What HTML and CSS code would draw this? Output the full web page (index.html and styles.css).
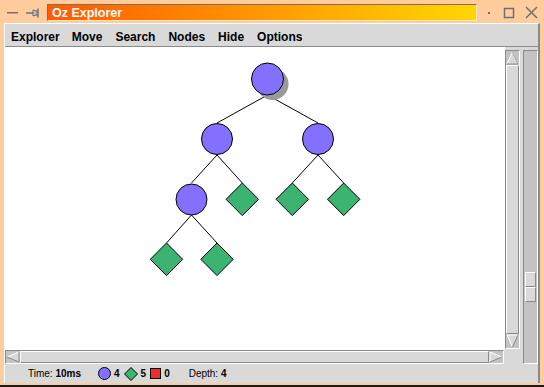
FILE: index.html
```html
<!DOCTYPE html>
<html lang="en">
<head>
    <meta charset="UTF-8">
    <title>Oz Explorer</title>
    <link rel="stylesheet" href="styles.css">
</head>
<body>

    <div class="window">
        <div class="titlebar">
            <svg class="tb-min" width="12" height="23" viewBox="0 0 12 23">
                <rect x="0" y="12" width="11" height="1.5" fill="#707070"/>
            </svg>
            <svg class="tb-pin" width="14" height="23" viewBox="0 0 14 23">
                <line x1="0" y1="13" x2="7" y2="13" stroke="#707070" stroke-width="1.5"/>
                <path d="M7 10 L11 11 L11 15 L7 16 Z" fill="#bdbdbd" stroke="#707070"/>
                <line x1="12" y1="8.5" x2="12" y2="17.5" stroke="#707070" stroke-width="1.5"/>
            </svg>
            <div class="title">Oz Explorer</div>
            <svg class="tb-dot" width="4" height="23" viewBox="0 0 4 23">
                <rect x="1" y="12" width="2" height="2" fill="#707070"/>
            </svg>
            <svg class="tb-max" width="12" height="23" viewBox="0 0 12 23">
                <rect x="1.5" y="8.5" width="9" height="9" fill="none" stroke="#707070" stroke-width="1.5"/>
            </svg>
            <svg class="tb-close" width="13" height="23" viewBox="0 0 13 23">
                <path d="M1 7 L12 18 M12 7 L1 18" stroke="#707070" stroke-width="1.5"/>
            </svg>
        </div>

        <div class="frame">
            <div class="menubar">
                <span>Explorer</span>
                <span>Move</span>
                <span>Search</span>
                <span>Nodes</span>
                <span>Hide</span>
                <span>Options</span>
            </div>

            <div class="workspace">
                <div class="canvas">
                    <svg class="tree" width="500" height="303" viewBox="5 48 500 303">
                        <g stroke="#000" stroke-width="1">
                            <line x1="267.5" y1="96" x2="217" y2="124"/>
                            <line x1="267.5" y1="96" x2="318" y2="124"/>
                            <line x1="217" y1="156" x2="191.5" y2="184"/>
                            <line x1="217" y1="156" x2="242.3" y2="184"/>
                            <line x1="318" y1="156" x2="292.3" y2="184"/>
                            <line x1="318" y1="156" x2="343.7" y2="184"/>
                            <line x1="191.5" y1="216" x2="166.5" y2="244"/>
                            <line x1="191.5" y1="216" x2="217" y2="244"/>
                        </g>
                        <circle cx="272.5" cy="85" r="16" fill="#9a9a9a"/>
                        <g fill="#8470ff" stroke="#000" stroke-width="1">
                            <circle cx="267.5" cy="80" r="16"/>
                            <circle cx="217" cy="140" r="15.5"/>
                            <circle cx="318" cy="140" r="15.5"/>
                            <circle cx="191.5" cy="200.5" r="15.5"/>
                        </g>
                        <g fill="#3cb371" stroke="#000" stroke-width="1">
                            <path d="M242.3 184 L258.5 200.3 L242.3 216.6 L226.1 200.3 Z"/>
                            <path d="M292.3 184 L308.5 200.3 L292.3 216.6 L276.1 200.3 Z"/>
                            <path d="M343.7 184 L359.9 200.3 L343.7 216.6 L327.5 200.3 Z"/>
                            <path d="M166.5 244 L182.7 260.3 L166.5 276.6 L150.3 260.3 Z"/>
                            <path d="M217 244 L233.2 260.3 L217 276.6 L200.8 260.3 Z"/>
                        </g>
                    </svg>
                </div>

                <div class="vscroll">
                    <svg class="arrow" width="13" height="14" viewBox="0 0 13 14">
                        <polygon points="6.5,1 12,13 1,13" fill="#d9d9d9"/>
                        <line x1="6.5" y1="1" x2="1" y2="13" stroke="#fff"/>
                        <line x1="6.5" y1="1" x2="12" y2="13" stroke="#8a8a8a" stroke-dasharray="1 1"/>
                        <line x1="1" y1="13" x2="12" y2="13" stroke="#8a8a8a"/>
                    </svg>
                    <div class="thumb"></div>
                    <svg class="arrow" width="13" height="14" viewBox="0 0 13 14">
                        <polygon points="1,1 12,1 6.5,13" fill="#d9d9d9"/>
                        <line x1="1" y1="1" x2="12" y2="1" stroke="#fff"/>
                        <line x1="1" y1="1" x2="6.5" y2="13" stroke="#fff"/>
                        <line x1="12" y1="1" x2="6.5" y2="13" stroke="#8a8a8a"/>
                    </svg>
                </div>

                <div class="scale">
                    <div class="scale-slider"><div></div><div></div></div>
                </div>

                <div class="hscroll">
                    <svg class="arrow" width="14" height="12" viewBox="0 0 14 12">
                        <polygon points="1,6 13,1 13,11" fill="#d9d9d9"/>
                        <line x1="1" y1="6" x2="13" y2="1" stroke="#fff"/>
                        <line x1="1" y1="6" x2="13" y2="11" stroke="#8a8a8a"/>
                        <line x1="13" y1="1" x2="13" y2="11" stroke="#8a8a8a"/>
                    </svg>
                    <div class="thumb"></div>
                    <svg class="arrow" width="14" height="12" viewBox="0 0 14 12">
                        <polygon points="1,1 13,6 1,11" fill="#d9d9d9"/>
                        <line x1="1" y1="1" x2="13" y2="6" stroke="#fff"/>
                        <line x1="1" y1="1" x2="1" y2="11" stroke="#fff"/>
                        <line x1="1" y1="11" x2="13" y2="6" stroke="#8a8a8a"/>
                    </svg>
                </div>
            </div>

            <div class="status">
                <span class="time">Time: <b>10ms</b></span>
                <span class="count">
                    <svg width="13" height="13" viewBox="0 0 13 13"><circle cx="6.5" cy="6.5" r="6" fill="#8470ff" stroke="#000"/></svg>
                    <b>4</b>
                </span>
                <span class="count">
                    <svg width="14" height="14" viewBox="0 0 14 14"><path d="M7 0.5 L13.5 7 L7 13.5 L0.5 7 Z" fill="#3cb371" stroke="#000"/></svg>
                    <b>5</b>
                </span>
                <span class="count">
                    <svg width="11" height="11" viewBox="0 0 11 11"><rect x="0.5" y="0.5" width="10" height="10" fill="#ee2c2c" stroke="#000"/></svg>
                    <b>0</b>
                </span>
                <span class="depth">Depth: <b>4</b></span>
            </div>
        </div>
    </div>

</body>
</html>
```

FILE: styles.css
```css
body {
    margin: 0;
    background: #ffcc9e;
    font-family: 'Liberation Sans', Arial, sans-serif;
}

.window {
    width: 544px;
    height: 385px;
    border-bottom: 2px solid #1a1a1a;
    display: flex;
    flex-direction: column;
}

/* title bar */

.titlebar {
    height: 23px;
    display: flex;
    align-items: flex-start;
    padding-left: 7px;
}

.tb-pin {
    margin-left: 7px;
}

.title {
    margin-left: 7px;
    margin-top: 4px;
    width: 424px;
    height: 15px;
    padding-left: 4px;
    background: linear-gradient(to right, #ff5a00, #ffd700);
    border-top: 1px solid #8a6a50;
    border-left: 1px solid #8a6a50;
    border-right: 1px solid #ffe6cc;
    border-bottom: 1px solid #ffe6cc;
    color: white;
    font-weight: bold;
    font-size: 12.5px;
    line-height: 16px;
}

.tb-dot {
    margin-left: 10px;
}

.tb-max {
    margin-left: 12px;
}

.tb-close {
    margin-left: 10px;
}

/* inner frame */

.frame {
    margin-left: 4px;
    width: 533px;
    height: 359px;
    background: #d9d9d9;
    border-top: 1px solid #fff;
    border-left: 1px solid #fff;
    border-right: 2px solid #8a8a8a;
    display: flex;
    flex-direction: column;
}

.menubar {
    height: 23px;
    box-sizing: border-box;
    padding-top: 3px;
    border-bottom: 1px solid #8a8a8a;
    display: flex;
    align-items: center;
    gap: 12px;
    padding-left: 6px;
    font-weight: bold;
    font-size: 12px;
    line-height: 20px;
}

.menubar span:nth-child(n+3) {
    margin-left: 1px;
}

.workspace {
    display: grid;
    grid-template-columns: 500px 15px 3px 15px;
    grid-template-rows: 303px 14px;
}

.canvas {
    grid-column: 1;
    grid-row: 1;
    background: white;
    overflow: hidden;
}

.tree {
    display: block;
}

/* scrollbars */

.vscroll,
.hscroll {
    background: #c3c3c3;
    border: 1px solid;
    border-color: #8a8a8a #fff #fff #8a8a8a;
    display: flex;
}

.vscroll {
    grid-column: 2;
    grid-row: 1;
    flex-direction: column;
    margin-top: 3px;
    margin-bottom: 1px;
    box-sizing: border-box;
}

.hscroll {
    grid-column: 1;
    grid-row: 2;
    flex-direction: row;
    margin-right: 1px;
    box-sizing: border-box;
}

.arrow {
    display: block;
    flex: none;
}

.thumb {
    flex: 1;
    background: #d9d9d9;
    border: 1px solid;
    border-color: #fff #8a8a8a #8a8a8a #fff;
}

.scale {
    grid-column: 4;
    grid-row: 1 / span 2;
    margin-top: 3px;
    background: #c3c3c3;
    border: 1px solid;
    border-color: #8a8a8a #fff #fff #8a8a8a;
    box-sizing: border-box;
    padding: 0 1px;
}

.scale-slider {
    margin-top: 221px;
}

.scale-slider div {
    height: 13px;
    background: #d9d9d9;
    border: 1px solid;
    border-color: #fff #8a8a8a #8a8a8a #fff;
}

/* status line */

.status {
    height: 18px;
    box-sizing: border-box;
    padding-top: 1px;
    display: flex;
    align-items: center;
    padding-left: 23px;
    font-size: 10px;
}

.status b {
    font-weight: bold;
}

.status svg {
    display: block;
}

.count {
    display: flex;
    align-items: center;
    gap: 3px;
    margin-left: 4px;
}

.time {
    margin-right: 13px;
}

.depth {
    margin-left: 19px;
}
```
